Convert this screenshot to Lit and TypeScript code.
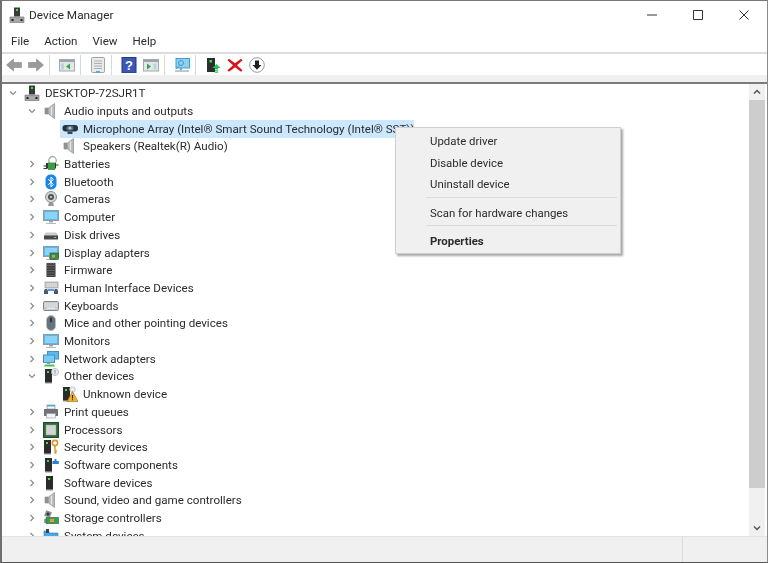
import { LitElement, html, svg, css, TemplateResult, SVGTemplateResult } from "lit";
import { customElement } from "lit/decorators.js";
import { classMap } from "lit/directives/class-map.js";

// tower shape is shared by a lot of the device icons
const tower = (x = 4): SVGTemplateResult => svg`
  <rect x="${x}" y="1" width="7" height="13" fill="#2b2b2b" />
  <rect x="${x + 2}" y="3" width="2" height="2" fill="#3fdc4a" />
  <rect x="${x}" y="14" width="7" height="1.4" fill="#777" />`;

const speaker = svg`
  <path d="M2 5h3.500L11.500 .5v15l-6-4.500H2z" fill="#b9bbbb" stroke="#8b8d8d" stroke-width=".7" />
  <path d="M2 5h3.500v6H2z" fill="#8f9191" />
  <path d="M8.500 3.500v9" stroke="#e6e6e6" stroke-width="1.300" />`;

const screen = svg`
  <rect x="0.500" y="1.500" width="15" height="10" fill="#5bb8ef" stroke="#8f9aa2" />
  <rect x="2" y="3" width="12" height="7" fill="#8bd3f7" />
  <path d="M6 12h4v1.500H6z" fill="#9aa" /><path d="M3 14h10v1H3z" fill="#b5bcc0" />`;

const ICONS: Record<string, SVGTemplateResult> = {
  computer: svg`
    <rect x="5" y="0.500" width="6" height="9" fill="#3a3a3a" />
    <rect x="7" y="2" width="2" height="2" fill="#3fdc4a" />
    <path d="M1 10h14v5.500H1z" fill="#a7a9a9" stroke="#6b6b6b" stroke-width=".6" />
    <rect x="2.500" y="12" width="2" height="2" fill="#222" />
    <rect x="11.500" y="12" width="2" height="2" fill="#222" />`,
  speaker,
  mic: svg`
    <rect x="0.500" y="4" width="15.500" height="6.500" rx="3" fill="#26343f" />
    <rect x="4.500" y="5" width="7" height="4.500" rx="2" fill="#5c6f7d" />
    <circle cx="8" cy="7.200" r="1.400" fill="#9fd0ea" />
    <rect x="5.500" y="10.500" width="5" height="2.500" fill="#444" />`,
  battery: svg`
    <circle cx="9.500" cy="4.500" r="3.800" fill="none" stroke="#9aa8a0" stroke-width="1.200" />
    <path d="M3 7h10v5.500H3z" fill="#2c3a2e" />
    <path d="M5 6.500h7v7.500H5z" fill="#3e9c46" />
    <path d="M.5 10h3.500M.5 12.500h3.500M12 9h3.500" stroke="#333" stroke-width="1.200" />`,
  bluetooth: svg`
    <rect x="2.500" y="0.500" width="11" height="15" rx="5" fill="#1a86ec" />
    <path d="M5.300 5l5 5.600L8 13V3l2.300 2.400-5 5.600" fill="none" stroke="#fff" stroke-width="1" />`,
  camera: svg`
    <circle cx="8" cy="6" r="5.500" fill="#d3d5d5" stroke="#8c8f8f" />
    <circle cx="8" cy="6" r="3" fill="#4b5057" />
    <circle cx="8" cy="6" r="1.300" fill="#a6b8c6" />
    <path d="M6 11.500h4l1 3.500H5z" fill="#999" />`,
  monitor: screen,
  disk: svg`
    <path d="M1.500 8.500l1.500-2.500h10l1.500 2.500z" fill="#d5d6d6" stroke="#999" stroke-width=".5" />
    <rect x="1" y="8.500" width="14" height="4" fill="#48494a" />
    <rect x="11" y="10" width="2" height="1" fill="#5fe068" />`,
  display: svg`${screen}
    <rect x="7" y="8" width="8.500" height="6.500" fill="#3c8c4a" stroke="#22552c" stroke-width=".6" />
    <rect x="9" y="10" width="3" height="2.500" fill="#c9a44a" />`,
  firmware: svg`
    <rect x="3.500" y="1" width="9" height="14" fill="#3a3a3a" />
    <path d="M3 3.500h10M3 6h10M3 8.500h10M3 11h10M3 13.500h10" stroke="#888" stroke-width=".6" />
    <path d="M5 .5v2M8 .5v2M11 .5v2" stroke="#888" />`,
  hid: svg`
    <rect x="2" y="2" width="13" height="6" fill="#c9cccf" stroke="#85898c" stroke-width=".6" />
    <path d="M3.500 4h10M3.500 6h10" stroke="#eee" stroke-dasharray="1 .8" />
    <path d="M1 14v-2.500C1 9.500 2 9 3 9s2 .5 2 2.500V14z" fill="#4b5a66" />
    <path d="M11 14v-2.500C11 9.500 12 9 13 9s2 .5 2 2.500V14z" fill="#4b5a66" />
    <rect x="5" y="9" width="6" height="2" fill="#4f9ee0" />`,
  keyboard: svg`
    <rect x="0.500" y="3.500" width="15" height="9" rx="1" fill="#c9cccf" stroke="#85898c" />
    <path d="M2 6h12M2 8h12" stroke="#eef0f1" stroke-width="1.200" stroke-dasharray="1.200 .6" />
    <path d="M4 10.300h8" stroke="#eef0f1" stroke-width="1.200" />`,
  mouse: svg`
    <rect x="3.500" y="0.500" width="9" height="15" rx="4.500" fill="#66727d" stroke="#b9bec2" />
    <rect x="7" y="2.500" width="2" height="5" rx="1" fill="#2d353c" />`,
  network: svg`
    <rect x="4.500" y="0.500" width="11" height="7.500" fill="#5bb8ef" stroke="#4b90b8" />
    <rect x="0.500" y="4" width="11" height="7.500" fill="#7ccbf5" stroke="#4b90b8" />
    <path d="M4 11.500h3V13H4z" fill="#999" />
    <path d="M2 13.500h9l1 2H1z" fill="#48c04f" />`,
  other: svg`${tower(2)}
    <circle cx="12" cy="4" r="3.600" fill="#e9ecef" stroke="#a8adb2" stroke-width=".7" />
    <path d="M12 2v2.600M12 5.300v.9" stroke="#5a8fbe" stroke-width="1" />`,
  unknown: svg`${tower(1)}
    <circle cx="10.500" cy="3.500" r="2.800" fill="#e9ecef" stroke="#a8adb2" stroke-width=".6" />
    <path d="M10.500 5.500L16 15.500H5z" fill="#f0b429" stroke="#9a6a10" stroke-width=".6" />
    <path d="M10.500 9v3.500M10.500 13.200v1" stroke="#222" stroke-width="1.100" />`,
  printer: svg`
    <rect x="4" y="1" width="8" height="4" fill="#fff" stroke="#777" stroke-width=".6" />
    <rect x="4" y="1" width="8" height="1.500" fill="#39b6d8" />
    <path d="M1 5h14v7H1z" fill="#6f7377" />
    <rect x="3.500" y="9.500" width="9" height="4.500" fill="#f4f4f4" stroke="#888" stroke-width=".5" />`,
  cpu: svg`
    <rect x="0.500" y="0.500" width="15" height="15" fill="#2f6a3a" stroke="#1d4a27" />
    <rect x="3" y="3" width="10" height="10" fill="#d3d5d5" stroke="#9fa2a2" stroke-width=".5" />`,
  security: svg`${tower(1)}
    <circle cx="12" cy="4" r="2.600" fill="none" stroke="#d89a2b" stroke-width="1.600" />
    <path d="M12 6.500v8M12 12h2M12 14h1.500" stroke="#d89a2b" stroke-width="1.400" />`,
  software: svg`${tower(2)}
    <path d="M11.500 2h2v2h2.300v3H9.500V4h2z" fill="#2b7fd8" />`,
  softdev: tower(3),
  storage: svg`
    <rect x="2" y="1" width="6" height="6" fill="#8b8f8f" transform="rotate(20 5 4)" />
    <circle cx="5" cy="4" r="1.500" fill="#333" />
    <path d="M3 7.500h12.500v6H3z" fill="#3c9c54" stroke="#22552c" stroke-width=".6" />
    <rect x="7" y="9" width="4" height="3" fill="#d8a530" />
    <path d="M1 10h2M1 12h2" stroke="#444" />`,
  system: svg`
    <path d="M1 3h5v2h9v10H1z" fill="#4aa8e8" stroke="#3179ab" stroke-width=".6" />
    <rect x="3" y="1" width="3" height="4" fill="#444" />`,
};

interface Row {
  label: string;
  icon: string;
  level: number;
  open?: boolean;
  selected?: boolean;
}

const ROWS: Row[] = [
  { label: "DESKTOP-72SJR1T", icon: "computer", level: 0, open: true },
  { label: "Audio inputs and outputs", icon: "speaker", level: 1, open: true },
  { label: "Microphone Array (Intel® Smart Sound Technology (Intel® SST))", icon: "mic", level: 2, selected: true },
  { label: "Speakers (Realtek(R) Audio)", icon: "speaker", level: 2 },
  { label: "Batteries", icon: "battery", level: 1 },
  { label: "Bluetooth", icon: "bluetooth", level: 1 },
  { label: "Cameras", icon: "camera", level: 1 },
  { label: "Computer", icon: "monitor", level: 1 },
  { label: "Disk drives", icon: "disk", level: 1 },
  { label: "Display adapters", icon: "display", level: 1 },
  { label: "Firmware", icon: "firmware", level: 1 },
  { label: "Human Interface Devices", icon: "hid", level: 1 },
  { label: "Keyboards", icon: "keyboard", level: 1 },
  { label: "Mice and other pointing devices", icon: "mouse", level: 1 },
  { label: "Monitors", icon: "monitor", level: 1 },
  { label: "Network adapters", icon: "network", level: 1 },
  { label: "Other devices", icon: "other", level: 1, open: true },
  { label: "Unknown device", icon: "unknown", level: 2 },
  { label: "Print queues", icon: "printer", level: 1 },
  { label: "Processors", icon: "cpu", level: 1 },
  { label: "Security devices", icon: "security", level: 1 },
  { label: "Software components", icon: "software", level: 1 },
  { label: "Software devices", icon: "softdev", level: 1 },
  { label: "Sound, video and game controllers", icon: "speaker", level: 1 },
  { label: "Storage controllers", icon: "storage", level: 1 },
  { label: "System devices", icon: "system", level: 1 },
];

const TOOLBAR: SVGTemplateResult[][] = [
  [
    svg`<path d="M.5 8l7-6v3.500h8v5h-8V14z" fill="#9a9c9c" stroke="#858787" stroke-width=".6" />`,
    svg`<path d="M15.500 8l-7-6v3.500h-8v5h8V14z" fill="#9a9c9c" stroke="#858787" stroke-width=".6" />`,
  ],
  [
    svg`<rect x="0.500" y="2.500" width="15" height="11.500" fill="#e4e7e9" stroke="#a4a9ac" />
      <rect x="1" y="3" width="14" height="2" fill="#9aa5ad" />
      <rect x="2" y="6.500" width="3" height="6" fill="#bcd2df" />
      <path d="M11 6.500v6L7 9.500z" fill="#2fa84a" />`,
  ],
  [
    svg`<rect x="1.500" y="0.500" width="13" height="15" rx="1" fill="#e8eaeb" stroke="#9ea3a6" />
      <path d="M4 4h8M4 6.500h8M4 9h8M4 11.500h8" stroke="#a8b0b5" />
      <rect x="6" y="14" width="4" height="1.500" fill="#3fb0e8" />`,
  ],
  [
    svg`<rect x="1" y="0.500" width="14" height="15.500" fill="#3a58b4" stroke="#1f3a82" />
      <text x="8" y="13" text-anchor="middle" font-family="Liberation Sans" font-weight="700" font-size="13" fill="#fff">?</text>`,
    svg`<rect x="0.500" y="2.500" width="15" height="11.500" fill="#e4e7e9" stroke="#a4a9ac" />
      <rect x="1" y="3" width="14" height="2" fill="#9aa5ad" />
      <path d="M4 6.500v6L8 9.500z" fill="#2fa84a" />
      <rect x="10.500" y="6.500" width="3" height="6" fill="#bcd2df" />`,
  ],
  [
    svg`<rect x="2" y="1.500" width="13.500" height="9.500" fill="#8fd0f0" stroke="#3f9fc9" />
      <path d="M7 11v2" stroke="#5ca9cb" stroke-width="2" />
      <path d="M1 14h14" stroke="#a7b4ba" stroke-width="1.500" />
      <circle cx="7" cy="6" r="2.500" fill="none" stroke="#3f9fc9" />
      <path d="M2 12l3.500-4" stroke="#3f9fc9" />`,
  ],
  [
    svg`<rect x="2" y="1" width="8" height="14" fill="#2d2d2d" />
      <rect x="4.500" y="3" width="2.500" height="2.500" fill="#3fdc4a" />
      <path d="M11.500 7l4 4h-2.300v1.500h-3.400V11H7.500z" fill="#22c45a" />
      <path d="M9.800 13.200h3.400v1h-3.400zM9.800 14.800h3.400v1h-3.400z" fill="#22c45a" />`,
    svg`<path d="M2 2.500L8 7l6-4.500L15.500 4 10 9l5.500 5-1.500 1.500L8 11l-6 4.500L.5 14 6 9 .5 4z" fill="#d8141c" transform="translate(0 -.8)" />`,
    svg`<circle cx="8" cy="8" r="7.300" fill="#fff" stroke="#9a9a9a" />
      <path d="M6 3.500h4V8h2.500L8 12.800 3.500 8H6z" fill="#1f1f1f" />`,
  ],
];

@customElement("app-root")
export class AppRoot extends LitElement {
  private renderRow(row: Row): TemplateResult {
    const chevron =
      row.level === 2
        ? null
        : html`<svg class="chevron" viewBox="0 0 8 8">
            <path d="${row.open ? "M1 2.500l3 3 3-3" : "M2.500 1l3 3-3 3"}" />
          </svg>`;
    return html`
      <div class="row level-${row.level}">
        <span class="chevron-slot">${chevron}</span>
        <span class=${classMap({ content: true, selected: !!row.selected })}>
          <svg class="icon" viewBox="0 0 16 16">${ICONS[row.icon]}</svg>
          <span class="label">${row.label}</span>
        </span>
      </div>
    `;
  }

  public render(): TemplateResult {
    return html`
      <div class="window">
        <div class="titlebar">
          <svg class="app-icon" viewBox="0 0 16 16">${ICONS.computer}</svg>
          <span class="title">Device Manager</span>
          <div class="controls">
            <svg viewBox="0 0 10 10"><path d="M0 5h10" /></svg>
            <svg viewBox="0 0 10 10"><path d="M.5.5h9v9h-9z" /></svg>
            <svg viewBox="0 0 10 10"><path d="M.5.5l9 9M9.500.5l-9 9" /></svg>
          </div>
        </div>
        <div class="menubar">
          <span>File</span><span>Action</span><span>View</span><span>Help</span>
        </div>
        <div class="toolbar">
          ${TOOLBAR.map(
            (group) => html`<div class="tool-group">
              ${group.map((icon) => html`<svg viewBox="0 0 16 16">${icon}</svg>`)}
            </div>`
          )}
        </div>
        <div class="toolbar-gap"></div>
        <div class="pane">
          <div class="tree">${ROWS.map((row) => this.renderRow(row))}</div>
          <div class="scrollbar">
            <svg viewBox="0 0 8 6"><path d="M1 4.500l3-3 3 3" /></svg>
            <div class="thumb"></div>
            <svg viewBox="0 0 8 6"><path d="M1 1.500l3 3 3-3" /></svg>
          </div>
        </div>
        <div class="statusbar"><div></div><div></div></div>
        <div class="menu">
          <div class="item">Update driver</div>
          <div class="item">Disable device</div>
          <div class="item">Uninstall device</div>
          <div class="sep"></div>
          <div class="item">Scan for hardware changes</div>
          <div class="sep"></div>
          <div class="item strong">Properties</div>
        </div>
      </div>
    `;
  }

  static styles = css`
    :host {
      display: block;
      width: 768px;
      height: 563px;
      overflow: hidden;
      background: #fff;
      font-family: Roboto, "Noto Sans", sans-serif;
      font-size: 11.6px;
      color: #2b2b2b;
    }

    .window {
      position: relative;
      box-sizing: border-box;
      display: flex;
      flex-direction: column;
      width: 768px;
      height: 563px;
      border-top: 1px solid #777;
      border-left: 2px solid #6f6f6f;
      border-right: 1px solid #8a8a8a;
      border-bottom: 1px solid #555;
      filter: blur(0.3px);
    }

    .titlebar {
      box-sizing: border-box;
      display: flex;
      align-items: center;
      height: 29px;
      flex: none;
      padding: 0 0 1px 7px;
    }

    .app-icon {
      width: 16px;
      height: 16px;
    }

    .title {
      margin-left: 4px;
      font-size: 11.8px;
    }

    .controls {
      display: flex;
      gap: 36px;
      margin-left: auto;
      margin-right: 18px;
    }

    .controls svg {
      width: 10px;
      height: 10px;
      fill: none;
      stroke: #333;
      stroke-width: 1;
    }

    .menubar {
      display: flex;
      align-items: center;
      gap: 15px;
      height: 22px;
      flex: none;
      padding-left: 9px;
      border-bottom: 2px solid #dcdcdc;
    }

    .toolbar {
      display: flex;
      align-items: center;
      height: 21px;
      flex: none;
      padding-left: 4px;
    }

    .tool-group {
      display: flex;
      align-items: center;
      gap: 6px;
      height: 20px;
      padding-right: 5px;
      margin-right: 9px;
      border-right: 1px solid #d8d8d8;
    }

    .tool-group:last-child {
      border-right: 0;
    }

    .tool-group svg {
      width: 16px;
      height: 16px;
    }

    .toolbar-gap {
      height: 7px;
      flex: none;
      background: #f0f0f0;
    }

    .pane {
      display: flex;
      flex: 1;
      min-height: 0;
      border-top: 2px solid #7b7b7b;
    }

    .tree {
      flex: 1;
      min-width: 0;
      overflow: hidden;
      padding-top: 0.400px;
    }

    .row {
      display: flex;
      align-items: center;
      height: 17.71px;
      white-space: nowrap;
    }

    .chevron-slot {
      display: flex;
      justify-content: center;
      width: 8px;
      flex: none;
    }

    .level-0 {
      padding-left: 7px;
    }

    .level-1 {
      padding-left: 26px;
    }

    .level-2 {
      padding-left: 44px;
    }

    .chevron {
      width: 8px;
      height: 8px;
      fill: none;
      stroke: #8a8a8a;
      stroke-width: 1.2;
    }

    .content {
      display: flex;
      align-items: center;
      height: 100%;
      margin-left: 5px;
      padding-left: 2px;
    }

    .level-2 .content {
      margin-left: 6px;
    }

    .content.selected {
      background: #cce8ff;
    }

    .icon {
      width: 16px;
      height: 16px;
      flex: none;
    }

    .label {
      margin-left: 5px;
    }

    .scrollbar {
      display: flex;
      flex-direction: column;
      align-items: center;
      justify-content: space-between;
      width: 16px;
      flex: none;
      margin-right: 2px;
      background: #f0f0f0;
    }

    .scrollbar svg {
      width: 8px;
      height: 6px;
      margin: 5px 0;
      fill: none;
      stroke: #555;
      stroke-width: 1.500;
    }

    .thumb {
      flex: 1;
      align-self: stretch;
      margin: 0 0 32px;
      background: #cdcdcd;
    }

    .statusbar {
      display: flex;
      height: 25px;
      flex: none;
      background: #f0f0f0;
      border-top: 1px solid #e4e4e4;
    }

    .statusbar div:first-child {
      width: 680px;
      border-right: 1px solid #dcdcdc;
    }

    .menu {
      position: absolute;
      left: 393px;
      top: 126px;
      box-sizing: border-box;
      width: 226px;
      height: 127px;
      padding: 3px 3px 0 2px;
      background: #f0f0f0;
      border: 1px solid #cfcfcf;
      box-shadow: 2px 2px 2px rgba(0, 0, 0, 0.35);
      font-size: 11.4px;
    }

    .item {
      height: 21.500px;
      line-height: 21.500px;
      padding-left: 32px;
    }

    .sep {
      height: 1px;
      margin: 1px 0 5px 28px;
      background: #dcdcdc;
    }

    .strong {
      font-weight: 700;
    }
  `;
}
